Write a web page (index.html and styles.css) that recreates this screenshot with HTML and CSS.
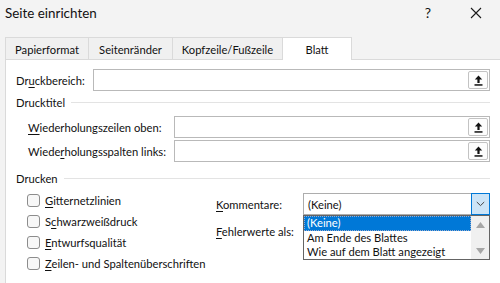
FILE: index.html
```html
<!DOCTYPE html>
<html lang="de">
<head>
<meta charset="utf-8">
<link rel="stylesheet" href="styles.css">
</head>
<body>
<div class="dialog">
  <div class="titlebar">
    <span class="title">Seite einrichten</span>
    <span class="help">?</span>
    <span class="close"><svg width="12" height="12" viewBox="0 0 12 12"><path d="M1 1L11 11M11 1L1 11" stroke="#1a1a1a" stroke-width="1.1"/></svg></span>
  </div>
  <div class="tabs">
    <div class="tab t1">Papierformat</div>
    <div class="tab t2">Seitenränder</div>
    <div class="tab t3">Kopfzeile/Fußzeile</div>
    <div class="tab t4 active">Blatt</div>
  </div>
  <div class="panel">
    <div class="row first">
      <label class="lbl w1">Dr<u>u</u>ckbereich:</label>
      <div class="field"><span class="pick"><svg width="9" height="11" viewBox="0 0 9 11"><path d="M4.5 0.5L0.8 4.6H3.4V8H5.6V4.6H8.2Z" fill="#111"/><rect x="0.5" y="9.2" width="8" height="1.5" fill="#111"/></svg></span></div>
    </div>
    <div class="group"><span>Drucktitel</span><i></i></div>
    <div class="row sub">
      <label class="lbl w2"><u>W</u>iederholungszeilen oben:</label>
      <div class="field"><span class="pick"><svg width="9" height="11" viewBox="0 0 9 11"><path d="M4.5 0.5L0.8 4.6H3.4V8H5.6V4.6H8.2Z" fill="#111"/><rect x="0.5" y="9.2" width="8" height="1.5" fill="#111"/></svg></span></div>
    </div>
    <div class="row sub second">
      <label class="lbl w2">Wiede<u>r</u>holungsspalten links:</label>
      <div class="field"><span class="pick"><svg width="9" height="11" viewBox="0 0 9 11"><path d="M4.5 0.5L0.8 4.6H3.4V8H5.6V4.6H8.2Z" fill="#111"/><rect x="0.5" y="9.2" width="8" height="1.5" fill="#111"/></svg></span></div>
    </div>
    <div class="group g2"><span>Drucken</span><i></i></div>
    <div class="print">
      <div class="checks">
        <div class="chk"><span class="box"></span><span><u>G</u>itternetzlinien</span></div>
        <div class="chk"><span class="box"></span><span>S<u>c</u>hwarzweißdruck</span></div>
        <div class="chk"><span class="box"></span><span><u>E</u>ntwurfsqualität</span></div>
        <div class="chk"><span class="box"></span><span><u>Z</u>eilen- und Spaltenüberschriften</span></div>
      </div>
      <div class="opts">
        <div class="opt">
          <label class="lbl w3"><u>K</u>ommentare:</label>
          <div class="combo">
            <span class="cval">(Keine)</span>
            <span class="cbtn"><svg width="9" height="6" viewBox="0 0 9 6"><path d="M0.8 1L4.5 4.6L8.2 1" fill="none" stroke="#444" stroke-width="1"/></svg></span>
            <div class="list">
              <div class="items">
                <div class="item sel">(Keine)</div>
                <div class="item">Am Ende des Blattes</div>
                <div class="item">Wie auf dem Blatt angezeigt</div>
              </div>
              <div class="scroll">
                <svg width="9" height="6" viewBox="0 0 9 6"><path d="M0 6L4.5 0L9 6Z" fill="#a6a6a6"/></svg>
                <svg width="9" height="6" viewBox="0 0 9 6"><path d="M0 0L4.5 6L9 0Z" fill="#a6a6a6"/></svg>
              </div>
            </div>
          </div>
        </div>
        <div class="opt">
          <label class="lbl w3"><u>F</u>ehlerwerte als:</label>
        </div>
      </div>
    </div>
  </div>
</div>
</body>
</html>
```
FILE: styles.css
```css
* { box-sizing: border-box; }
html, body { margin: 0; padding: 0; }
body {
  width: 500px;
  height: 283px;
  overflow: hidden;
  background: #f3f3f3;
  font-family: Lato, "Noto Sans", sans-serif;
  font-size: 11.2px;
  color: #111;
  white-space: nowrap;
}
u { text-decoration: underline; text-underline-offset: 1.5px; }
.dialog { display: flex; flex-direction: column; height: 283px; }
.titlebar {
  height: 30px;
  display: flex;
  align-items: center;
  padding-left: 5px;
}
.title { font-size: 13.4px; flex: 1; margin-top: -5px; }
.help { font-size: 14px; width: 48px; text-align: center; margin-top: -5px; }
.close { width: 48px; display: flex; justify-content: center; margin-top: -5px; }
.tabs {
  display: flex;
  padding-left: 5px;
  margin-top: 7px;
  height: 22px;
  align-items: flex-end;
}
.tab {
  height: 22px;
  display: flex;
  align-items: center;
  justify-content: center;
  border: 1px solid #dadada;
  border-bottom: none;
  border-left: none;
  background: #f0f0f0;
  padding-top: 1px;
}
.t1 { width: 84px; border-left: 1px solid #dadada; }
.t2 { width: 84px; }
.t3 { width: 110px; }
.t4 { width: 69px; }
.tab.active { background: #fff; height: 23px; margin-bottom: -1px; position: relative; padding-top: 0; }
.panel {
  flex: 1;
  margin-left: 5px;
  background: #fff;
  border-left: 1px solid #dadada;
  border-top: 1px solid #dadada;
  padding: 9px 10px 0 10px;
  display: flex;
  flex-direction: column;
}
.row { display: flex; align-items: center; height: 22px; }
.row.sub { padding-left: 12px; }
.row.second { margin-top: 2px; }
.lbl { flex: none; }
.w1 { width: 77px; }
.w2 { width: 146px; }
.w3 { width: 87px; }
.field {
  flex: 1;
  height: 22px;
  border: 1px solid #b9b9b9;
  background: #fff;
  display: flex;
  justify-content: flex-end;
  align-items: center;
  padding-right: 1px;
}
.pick {
  width: 20px;
  height: 18px;
  border: 1px solid #c3c3c3;
  border-radius: 2px;
  background: #fdfdfd;
  display: flex;
  align-items: center;
  justify-content: center;
}
.group {
  display: flex;
  align-items: center;
  height: 22px;
  margin-top: 0;
  margin-bottom: 3px;
}
.group i { flex: 1; height: 1px; background: #e3e3e3; margin-left: 6px; }
.group.g2 { margin-top: 5px; margin-bottom: 2px; }
.print { display: flex; }
.checks { width: 200px; flex: none; padding-left: 11px; display: flex; flex-direction: column; gap: 8px; padding-top: 3px; }
.chk { display: flex; align-items: center; height: 13px; gap: 5px; }
.box {
  flex: none;
  width: 13px;
  height: 13px;
  border: 1px solid #8c8c8c;
  border-radius: 3px;
  background: #f7f7f7;
}
.opts { flex: 1; display: flex; flex-direction: column; padding-top: 2px; }
.opt { display: flex; align-items: center; height: 22px; }
.opt + .opt { margin-top: 5px; }
.combo {
  flex: 1;
  height: 22px;
  border: 1px solid #adadad;
  display: flex;
  align-items: center;
  position: relative;
  background: #fff;
}
.cval { flex: 1; padding-left: 4px; }
.cbtn {
  width: 19px;
  height: 22px;
  margin: -1px -1px -1px 0;
  border: 1px solid #0078d7;
  background: #cce4f7;
  display: flex;
  align-items: center;
  justify-content: center;
}
.list {
  position: absolute;
  left: -1px;
  right: -1px;
  top: 21px;
  height: 45px;
  border: 1px solid #646464;
  background: #fff;
  display: flex;
  z-index: 2;
}
.items { flex: 1; }
.item { height: 14.5px; line-height: 14px; padding-left: 3px; }
.item.sel { background: #0078d7; color: #fff; outline: 1px dotted #9ac; outline-offset: -1px; }
.scroll {
  width: 18px;
  background: #f0f0f0;
  display: flex;
  flex-direction: column;
  justify-content: space-between;
  align-items: center;
  padding: 6px 0 5px;
}
```
